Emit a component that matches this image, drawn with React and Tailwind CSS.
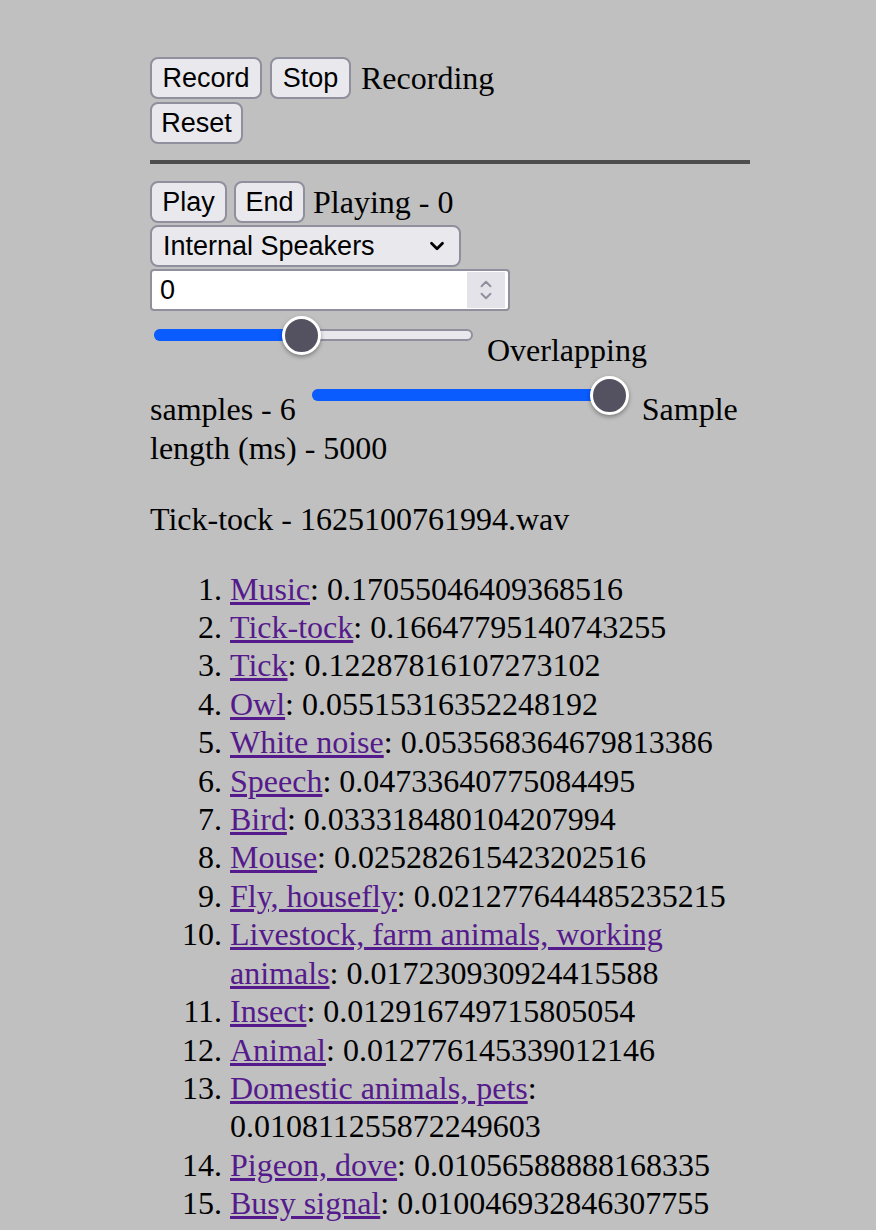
import { ChevronDown, ChevronUp } from "lucide-react";

const results = [
  ["Music", "0.17055046409368516"],
  ["Tick-tock", "0.16647795140743255"],
  ["Tick", "0.12287816107273102"],
  ["Owl", "0.05515316352248192"],
  ["White noise", "0.053568364679813386"],
  ["Speech", "0.04733640775084495"],
  ["Bird", "0.033318480104207994"],
  ["Mouse", "0.025282615423202516"],
  ["Fly, housefly", "0.021277644485235215"],
  ["Livestock, farm animals, working animals", "0.017230930924415588"],
  ["Insect", "0.012916749715805054"],
  ["Animal", "0.012776145339012146"],
  ["Domestic animals, pets", "0.010811255872249603"],
  ["Pigeon, dove", "0.01056588888168335"],
  ["Busy signal", "0.010046932846307755"],
];

const sans = { fontFamily: '"Liberation Sans", Arial, sans-serif' };

function Btn({ children, w }) {
  return (
    <button
      style={sans}
      className={`h-[42px] ${w} shrink-0 rounded-[8px] border-2 border-[#8f8f9d] bg-[#e9e9ed] text-[27px] leading-none text-black`}
    >
      {children}
    </button>
  );
}

// range input drawn by hand so it looks like the reference
function Slider({ value, w }) {
  return (
    <div className={`relative h-[40px] ${w} shrink-0`}>
      <div className="absolute left-[4px] right-[4px] top-[14px] h-[12px] rounded-full border-2 border-[#8f8f9d] bg-[#e9e9ed]" />
      <div
        className="absolute left-[4px] top-[14px] h-[12px] rounded-full bg-[#0a5cff]"
        style={{ width: `calc(${value} * (100% - 47px) + 20px)` }}
      />
      <div
        className="absolute top-[0.5px] h-[39px] w-[39px] rounded-full border-[3px] border-white bg-[#545260] shadow-[0_2px_4px_rgba(0,0,0,0.35)]"
        style={{ left: `calc(${value} * (100% - 47px) + 4px)` }}
      />
    </div>
  );
}

export default function App() {
  return (
    <div
      className="min-h-screen bg-[#c0c0c0] text-black"
      style={{ fontFamily: '"Liberation Serif", "Times New Roman", serif' }}
    >
      <div className="ml-[150px] w-[600px] pt-[57px] text-[32px] leading-[38.4px]">
        <div className="flex items-center gap-[8px]">
          <Btn w="w-[112px]">Record</Btn>
          <Btn w="w-[81px]">Stop</Btn>
          <span className="ml-[2px]">Recording</span>
        </div>
        <div className="mt-[3px] flex">
          <Btn w="w-[93px]">Reset</Btn>
        </div>
        <div className="mt-[16px] h-[4px] bg-[#4d4d4d]" />

        <div className="mt-[17px] flex items-center gap-[7px]">
          <Btn w="w-[77px]">Play</Btn>
          <Btn w="w-[71px]">End</Btn>
          <span className="ml-[1px]">Playing - 0</span>
        </div>

        <div
          style={sans}
          className="mt-[2px] flex h-[42px] w-[311px] items-center justify-between rounded-[8px] border-2 border-[#8f8f9d] bg-[#e9e9ed] pl-[11px] pr-[11px] text-[27px]"
        >
          <span>Internal Speakers</span>
          <ChevronDown size={22} strokeWidth={3} />
        </div>

        <div
          style={sans}
          className="mt-[2px] flex h-[42px] w-[360px] items-center justify-between rounded-[4px] border-2 border-[#8f8f9d] bg-white pl-[8px] pr-[3px] text-[27px]"
        >
          <span>0</span>
          <div className="flex h-[36px] w-[38px] flex-col items-center justify-center bg-[#e4e3e9] text-[#8f8f9d]">
            <ChevronUp size={18} strokeWidth={2.5} className="-mb-[3px]" />
            <ChevronDown size={18} strokeWidth={2.5} className="-mt-[3px]" />
          </div>
        </div>

        <div className="flex items-start">
          <div className="mt-[4px]">
            <Slider value={0.457} w="w-[327px]" />
          </div>
          <span className="ml-[10px] mt-[20px]">Overlapping</span>
        </div>
        <div className="flex items-start">
          <span className="mt-[21px]">samples - 6</span>
          <div className="ml-[12px] mt-[6px]">
            <Slider value={1} w="w-[325px]" />
          </div>
          <span className="ml-[9px] mt-[21px]">Sample</span>
        </div>
        <div>length (ms) - 5000</div>

        <p className="mt-[33px]">Tick-tock - 1625100761994.wav</p>

        <ol className="mt-[31px] list-decimal pl-[80px]">
          {results.map(([name, score]) => (
            <li key={name}>
              <a href="#" className="text-[#551a8b] underline">
                {name}
              </a>
              : {score}
            </li>
          ))}
        </ol>
      </div>
    </div>
  );
}
